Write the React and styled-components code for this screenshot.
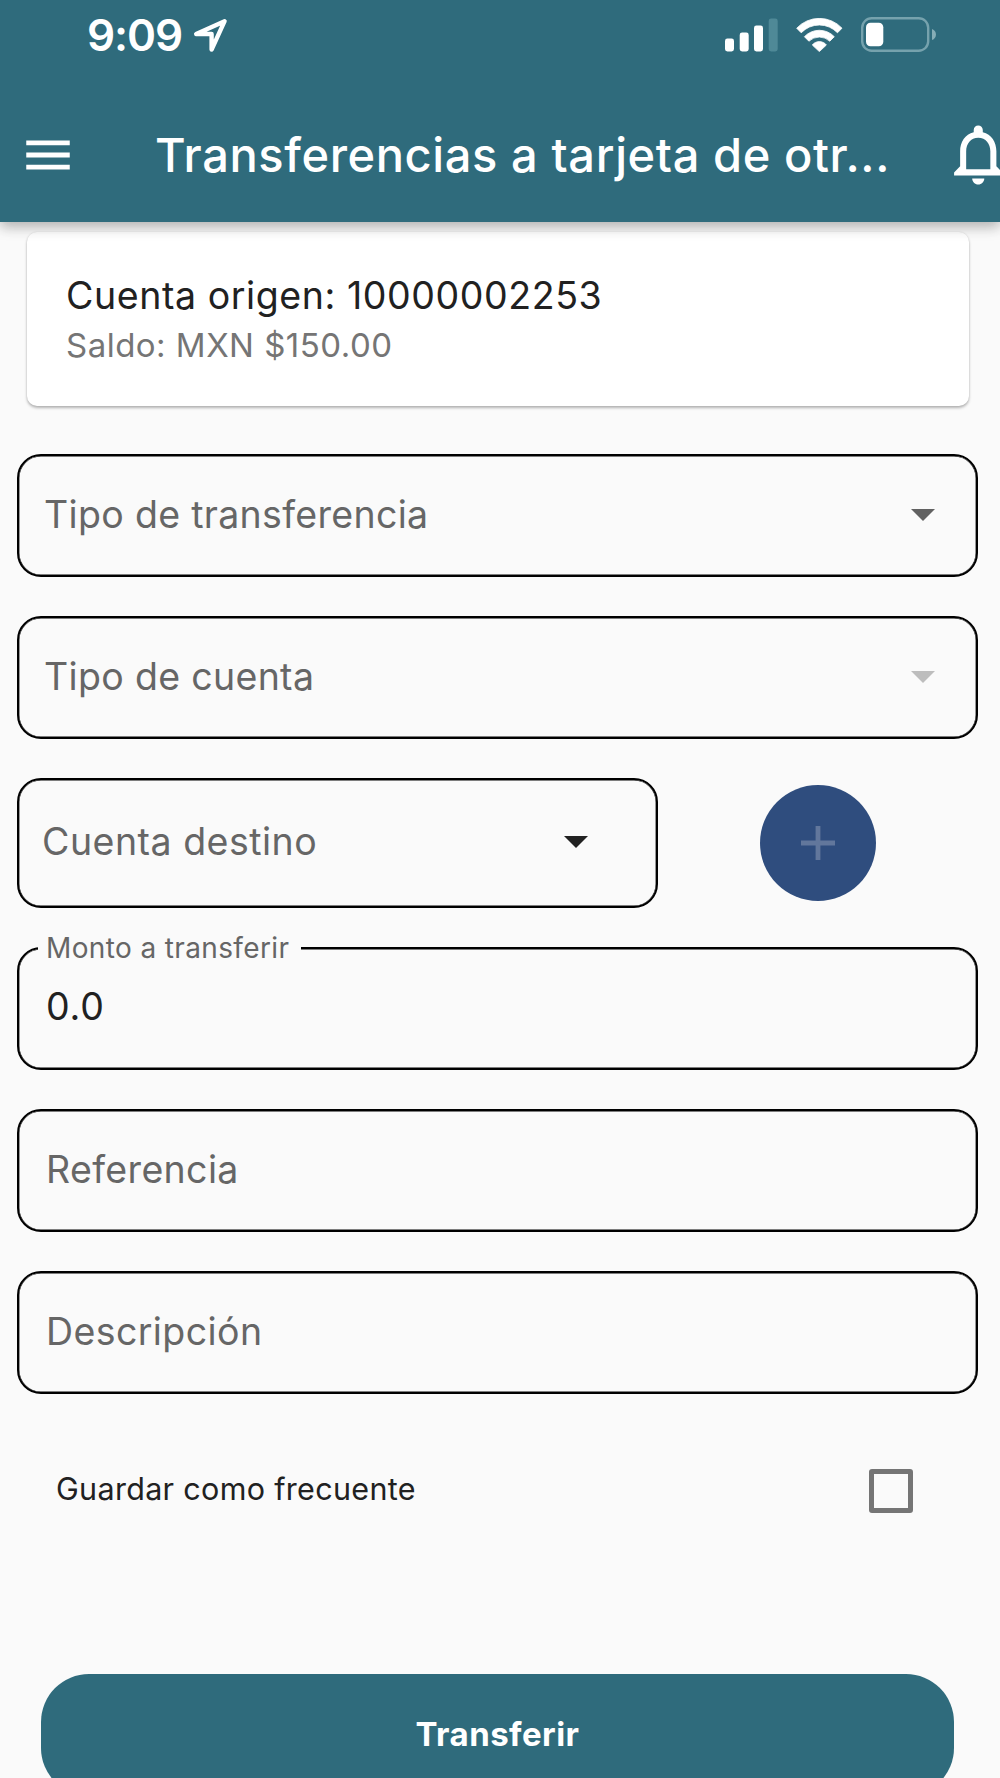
import React, { useState } from 'react';
import styled, { createGlobalStyle } from 'styled-components';

const color_primary = '#2f6b7c';
const color_background = '#fafafa';
const color_text = '#212121';
const color_label = '#666666';
const color_navy = '#2f4d7e';

const StatusIcons = () => (
  <StatusGroup>
    <svg width="53" height="34" viewBox="0 0 53 34" fill="#fff">
      <rect x="0" y="20.5" width="9" height="13" rx="2.4" />
      <rect x="14.7" y="14.5" width="9" height="19" rx="2.4" />
      <rect x="29" y="7.5" width="9" height="26" rx="2.4" />
      <rect x="43.7" y="0.5" width="9" height="33" rx="2.4" fill="#4f8997" />
    </svg>
    <svg width="47" height="34" viewBox="0 0 47 34" fill="#fff" stroke="#fff" strokeWidth="0.8" strokeLinejoin="round">
      <path d="M0.7 10.2A31 31 0 0 1 46 10.2L41.5 14.8A25 25 0 0 0 5.2 14.8Z" />
      <path d="M8.4 18.7A20.6 20.6 0 0 1 38.3 18.7L33.8 23.2A15.2 15.2 0 0 0 12.9 23.2Z" />
      <path d="M16.3 27A9 9 0 0 1 30.4 27L23.35 33.6Z" />
    </svg>
    <svg width="76" height="36" viewBox="0 0 76 36" fill="none">
      <rect x="1.2" y="1.2" width="66" height="32.6" rx="9.5" stroke="#76a2ad" strokeWidth="2.4" />
      <rect x="5" y="5.7" width="17.3" height="23.6" rx="4.5" fill="#fff" />
      <path d="M71 11.9C76.3 13.6 76.3 21.3 71 23Z" fill="#86adb6" />
    </svg>
  </StatusGroup>
);

const Arrow = ({ color }) => (
  <svg width="24" height="12" viewBox="0 0 24 12" fill={color}>
    <path d="M0 0H24L12 12Z" />
  </svg>
);

const Header = () => (
  <HeaderContainer>
    <StatusBar>
      <Time>9:09</Time>
      <svg width="36" height="36" viewBox="0 0 36 36" fill="none" stroke="#fff" strokeWidth="4.4" strokeLinejoin="round">
        <path d="M32.6 4.2L4.2 17H19.6V32.6Z" />
      </svg>
      <StatusIcons />
    </StatusBar>
    <Toolbar>
      <IconButton type="button" aria-label="Menú">
        <svg width="58" height="58" viewBox="0 0 24 24" fill="#fff">
          <path d="M3 18h18v-2H3v2zm0-5h18v-2H3v2zm0-7v2h18V6H3z" />
        </svg>
      </IconButton>
      <Title>Transferencias a tarjeta de otr...</Title>
      <IconButton type="button" aria-label="Notificaciones">
        <svg width="72.5" height="72.5" viewBox="0 0 24 24" fill="#fff">
          <path d="M12 22c1.1 0 2-.9 2-2h-4c0 1.1.9 2 2 2zm6-6v-5c0-3.07-1.63-5.64-4.5-6.32V4c0-.83-.67-1.5-1.5-1.5s-1.5.67-1.5 1.5v.68C7.64 5.36 6 7.92 6 11v5l-2 2v1h16v-1l-2-2zm-2 1H8v-6c0-2.48 1.51-4.5 4-4.5s4 2.02 4 4.5v6z" />
        </svg>
      </IconButton>
    </Toolbar>
  </HeaderContainer>
);

const App = () => {
  const [saved, setSaved] = useState(false);
  const toggleSaved = () => {
    setSaved(!saved);
  };
  return (
    <Screen>
      <GlobalStyle />
      <Header />
      <Content>
        <AccountCard>
          <AccountName>Cuenta origen: 10000002253</AccountName>
          <Balance>Saldo: MXN $150.00</Balance>
        </AccountCard>
        <Form>
          <Field>
            <FieldText>Tipo de transferencia</FieldText>
            <Arrow color="#616161" />
          </Field>
          <Field>
            <FieldText>Tipo de cuenta</FieldText>
            <Arrow color="#bdbdbd" />
          </Field>
          <TargetRow>
            <TargetField>
              <FieldText spacing="0.5px">Cuenta destino</FieldText>
              <Arrow color={color_text} />
            </TargetField>
            <AddButton type="button" aria-label="Agregar cuenta">
              <svg width="34" height="34" viewBox="0 0 34 34" fill="#62779c">
                <path d="M14.6 0h4.8v14.6H34v4.8H19.4V34h-4.8V19.4H0v-4.8h14.6Z" />
              </svg>
            </AddButton>
          </TargetRow>
          <Field inset="27px">
            <FloatingLabel>Monto a transferir</FloatingLabel>
            <Amount>0.0</Amount>
          </Field>
          <Field inset="27px">
            <FieldText spacing="0.36px">Referencia</FieldText>
          </Field>
          <Field inset="27px">
            <FieldText spacing="0.4px">Descripción</FieldText>
          </Field>
          <SaveRow>
            <SaveLabel>Guardar como frecuente</SaveLabel>
            <Checkbox type="button" role="checkbox" aria-checked={saved} checked={saved} onClick={toggleSaved} />
          </SaveRow>
          <SubmitButton type="button">Transferir</SubmitButton>
        </Form>
      </Content>
    </Screen>
  );
};

export default App;

const GlobalStyle = createGlobalStyle`
  * {
    box-sizing: border-box;
  }

  body {
    margin: 0;
    overflow: hidden;
    background: ${color_background};
    font-family: Inter, 'Liberation Sans', sans-serif;
  }

  svg {
    display: block;
    flex-shrink: 0;
  }

  button {
    font-family: inherit;
    border: none;
    padding: 0;
    cursor: pointer;
  }
`;

const Screen = styled.div`
  display: flex;
  flex-direction: column;
  width: 1000px;
  height: 1778px;
  overflow: hidden;
  background: ${color_background};
`;

const HeaderContainer = styled.header`
  position: relative;
  z-index: 1;
  flex-shrink: 0;
  height: 222px;
  background: ${color_primary};
  color: #fff;
  box-shadow: 0 5px 12px rgba(0, 0, 0, 0.26), 0 2px 18px rgba(0, 0, 0, 0.06);
`;

const StatusBar = styled.div`
  display: flex;
  align-items: center;
  height: 70px;
  margin-bottom: 17px;
  padding: 0 63px 0 87px;
`;

const Time = styled.span`
  width: 105px;
  font-size: 44px;
  font-weight: 600;
  letter-spacing: -1.1px;
`;

const StatusGroup = styled.div`
  display: flex;
  align-items: center;
  gap: 18px;
  margin-left: auto;
`;

const Toolbar = styled.div`
  display: flex;
  align-items: center;
  height: 135px;
  padding-left: 19px;
  overflow: hidden;
`;

const IconButton = styled.button`
  flex-shrink: 0;
  background: none;
`;

const Title = styled.h1`
  flex: 0 0 865px;
  margin: 0;
  padding: 0 0 1px 78px;
  font-size: 47px;
  font-weight: 550;
  white-space: nowrap;
  letter-spacing: 0.6px;
`;

const Content = styled.main`
  display: flex;
  flex-direction: column;
  padding: 10px 22px 0 17px;
`;

const AccountCard = styled.section`
  height: 173.5px;
  margin: 0 9px 48.5px 10px;
  padding: 40px 39px 0;
  border-radius: 10px;
  background: #fff;
  box-shadow: 0 2px 3px rgba(0, 0, 0, 0.28), 0 0 2px rgba(0, 0, 0, 0.1);
`;

const AccountName = styled.div`
  color: ${color_text};
  font-size: 37.5px;
  line-height: 48px;
  letter-spacing: 0.58px;
`;

const Balance = styled.div`
  margin-top: 3px;
  color: #757575;
  font-size: 33px;
  line-height: 44px;
  letter-spacing: 0.48px;
`;

const Form = styled.form`
  display: flex;
  flex-direction: column;
  gap: 39px;
`;

const Field = styled.div`
  position: relative;
  display: flex;
  align-items: center;
  justify-content: space-between;
  height: 123px;
  padding: 0 41px 2px ${(props) => props.inset || '25px'};
  border: 2px solid #000;
  border-radius: 24px;
  box-shadow: inset 0 0 0 0.4px #000;
`;

const FieldText = styled.span`
  color: ${color_label};
  font-size: 37.5px;
  letter-spacing: ${(props) => props.spacing || '0.32px'};
`;

const TargetRow = styled.div`
  display: flex;
  align-items: center;
  gap: 102px;
`;

const TargetField = styled(Field)`
  width: 641px;
  height: 130px;
  padding: 0 68px 3px 23px;
`;

const AddButton = styled.button`
  display: flex;
  align-items: center;
  justify-content: center;
  width: 116px;
  height: 116px;
  border-radius: 50%;
  background: ${color_navy};
`;

/* Sits on the top border and hides the part of it behind the text */
const FloatingLabel = styled.label`
  position: absolute;
  top: -18px;
  left: 19px;
  width: 263px;
  padding-left: 8px;
  background: ${color_background};
  color: ${color_label};
  font-size: 28px;
  line-height: 34px;
  letter-spacing: 0.37px;
  white-space: nowrap;
`;

const Amount = styled.span`
  padding-bottom: 3px;
  color: ${color_text};
  font-size: 37.5px;
  letter-spacing: 0.8px;
`;

const SaveRow = styled.div`
  display: flex;
  align-items: center;
  justify-content: space-between;
  height: 115px;
  padding: 0 65px 0 39px;
`;

const SaveLabel = styled.span`
  padding-bottom: 5px;
  color: ${color_text};
  font-size: 30.5px;
  letter-spacing: 0.32px;
`;

const Checkbox = styled.button`
  width: 44px;
  height: 44px;
  border: 5px solid #757575;
  border-radius: 3px;
  background: ${(props) => (props.checked ? color_primary : 'transparent')};
`;

const SubmitButton = styled.button`
  height: 122px;
  margin: 87px 24px 0;
  padding-bottom: 3px;
  border-radius: 48px;
  background: ${color_primary};
  color: #fff;
  font-size: 33px;
  font-weight: 700;
  letter-spacing: 0.45px;
`;
